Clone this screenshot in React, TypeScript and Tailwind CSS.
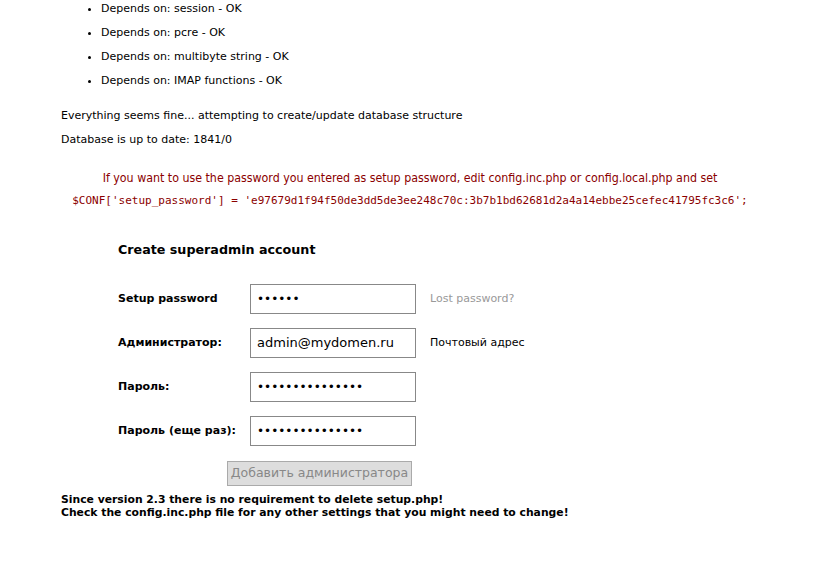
import React from 'react';

const deps = ['session', 'pcre', 'multibyte string', 'IMAP functions'];

const rows = [
  { label: 'Setup password', value: '••••••', hint: 'Lost password?', muted: true, secret: true },
  { label: 'Администратор:', value: 'admin@mydomen.ru', hint: 'Почтовый адрес', muted: false, secret: false },
  { label: 'Пароль:', value: '•••••••••••••••', hint: '', muted: false, secret: true },
  { label: 'Пароль (еще раз):', value: '•••••••••••••••', hint: '', muted: false, secret: true },
];

export default function App() {
  return (
    <div className="min-h-[562px] w-[837px] bg-white pl-[61px] pt-px text-[11px] text-black [font-family:'DejaVu_Sans',sans-serif]">
      <ul className="list-disc pl-[40px]">
        {deps.map((d) => (
          <li key={d} className="h-[24px] leading-[16px]">
            Depends on: {d} - OK
          </li>
        ))}
      </ul>
      <p className="mt-[11px] leading-[16px]">Everything seems fine... attempting to create/update database structure</p>
      <p className="mt-[8px] leading-[16px]">Database is up to date: 1841/0</p>

      <div className="mt-[22px] w-[698px] text-center text-[#8b0000]">
        <p className="text-[12.3px] leading-[16px] [font-family:'DejaVu_Sans_Condensed','DejaVu_Sans',sans-serif] [font-stretch:condensed]">
          If you want to use the password you entered as setup password, edit config.inc.php or config.local.php and set
        </p>
        <p className="mt-[7px] leading-[16px] [font-family:'DejaVu_Sans_Mono',monospace]">
          $CONF['setup_password'] = 'e97679d1f94f50de3dd5de3ee248c70c:3b7b1bd62681d2a4a14ebbe25cefec41795fc3c6';
        </p>
      </div>

      <div className="ml-[57px] mt-[33px]">
        <h2 className="text-[12.7px] font-bold leading-[16px]">Create superadmin account</h2>
        <div className="mt-[26px] flex flex-col gap-[14px]">
          {rows.map((r) => (
            <div key={r.label} className="flex items-center">
              <span className="w-[132px] text-[11px] font-bold">{r.label}</span>
              <div
                className={`flex h-[30px] w-[166px] items-center border border-[#888] px-[6px] ${
                  r.secret ? 'text-[12px]' : 'text-[13px]'
                }`}
              >
                {r.value}
              </div>
              {r.hint && (
                <span className={`ml-[14px] text-[11px] ${r.muted ? 'text-[#999]' : 'text-black'}`}>{r.hint}</span>
              )}
            </div>
          ))}
        </div>
        <div className="mt-[15px] pl-[109px]">
          <button className="h-[25px] w-[185px] whitespace-nowrap border border-[#aaa] bg-[#ddd] px-[2px] text-[12.5px] text-[#888]">
            Добавить администратора
          </button>
        </div>
      </div>

      <p className="mt-[7px] text-[10.8px] font-bold leading-[13px]">
        Since version 2.3 there is no requirement to delete setup.php!
        <br />
        Check the config.inc.php file for any other settings that you might need to change!
      </p>
    </div>
  );
}
